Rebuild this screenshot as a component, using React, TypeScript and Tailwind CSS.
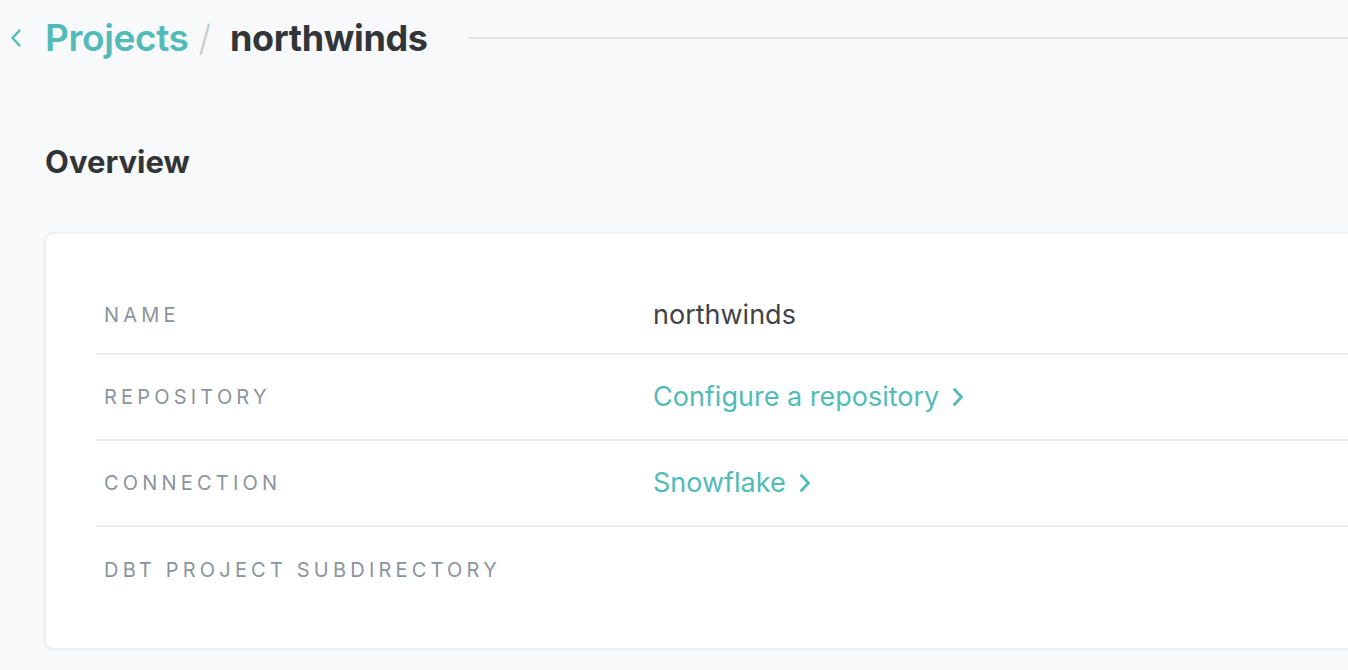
const rows = [
  { label: "Name", value: "northwinds", link: false },
  { label: "Repository", value: "Configure a repository", link: true },
  { label: "Connection", value: "Snowflake", link: true },
  { label: "dbt Project Subdirectory", value: "", link: false },
];

const Chevron = ({ dir, className }: { dir: "left" | "right"; className?: string }) => (
  <svg width="12" height="18" viewBox="0 0 12 18" fill="none" className={className}>
    <path
      d={dir === "left" ? "M9.5 1.5 L2.5 9 L9.5 16.5" : "M2.5 1.5 L9.5 9 L2.5 16.5"}
      stroke="currentColor"
      strokeWidth={dir === "left" ? 2.4 : 2.8}
      strokeLinecap="round"
      strokeLinejoin="round"
    />
  </svg>
);

export default function App() {
  return (
    <div
      className="w-full h-[670px] overflow-hidden bg-[#f8f9fa] text-[#323538]"
      style={{ fontFamily: "Inter, 'Noto Sans', sans-serif" }}
    >
      {/* breadcrumb */}
      <header className="flex items-center h-[75px] pl-[10px]">
        <Chevron dir="left" className="text-[#52bbb8]" />
        <a className="ml-[23px] text-[37px] font-semibold text-[#52bbb8] tracking-[-0.01em]">
          Projects
        </a>
        <span className="ml-[10px] text-[36px] text-[#c9cdd1] font-light">/</span>
        <h1 className="ml-[19px] text-[36px] font-bold tracking-[-0.01em]">northwinds</h1>
        <div className="ml-[40px] flex-1 h-[2px] bg-[#e3e5e8]" />
      </header>

      <main className="pl-[44px]">
        <h2 className="mt-[71px] text-[31px] font-bold leading-none pl-[1px]">Overview</h2>

        <section className="mt-[55px] w-[1400px] h-[418px] bg-white rounded-[10px] border-2 border-[#eeeff1] shadow-[0_1px_3px_rgba(0,0,0,0.04)] pl-[50px] pt-[37px]">
          {rows.map((row, i) => (
            <div
              key={row.label}
              className={`flex items-center pl-[8px] ${
                i === 0 ? "h-[84px] pt-[6px]" : "h-[86px]"
              } ${i < rows.length - 1 ? "border-b-2 border-[#ecedef]" : ""}`}
            >
              <div className="w-[549px] shrink-0 text-[20px] uppercase tracking-[0.21em] text-[#8b949c]">
                {row.label}
              </div>
              {row.link ? (
                <a className="flex items-center text-[27px] text-[#52bbb8]">
                  {row.value}
                  <Chevron dir="right" className="ml-[13px]" />
                </a>
              ) : (
                <span className="text-[27px] text-[#40444a]">{row.value}</span>
              )}
            </div>
          ))}
        </section>
      </main>
    </div>
  );
}
